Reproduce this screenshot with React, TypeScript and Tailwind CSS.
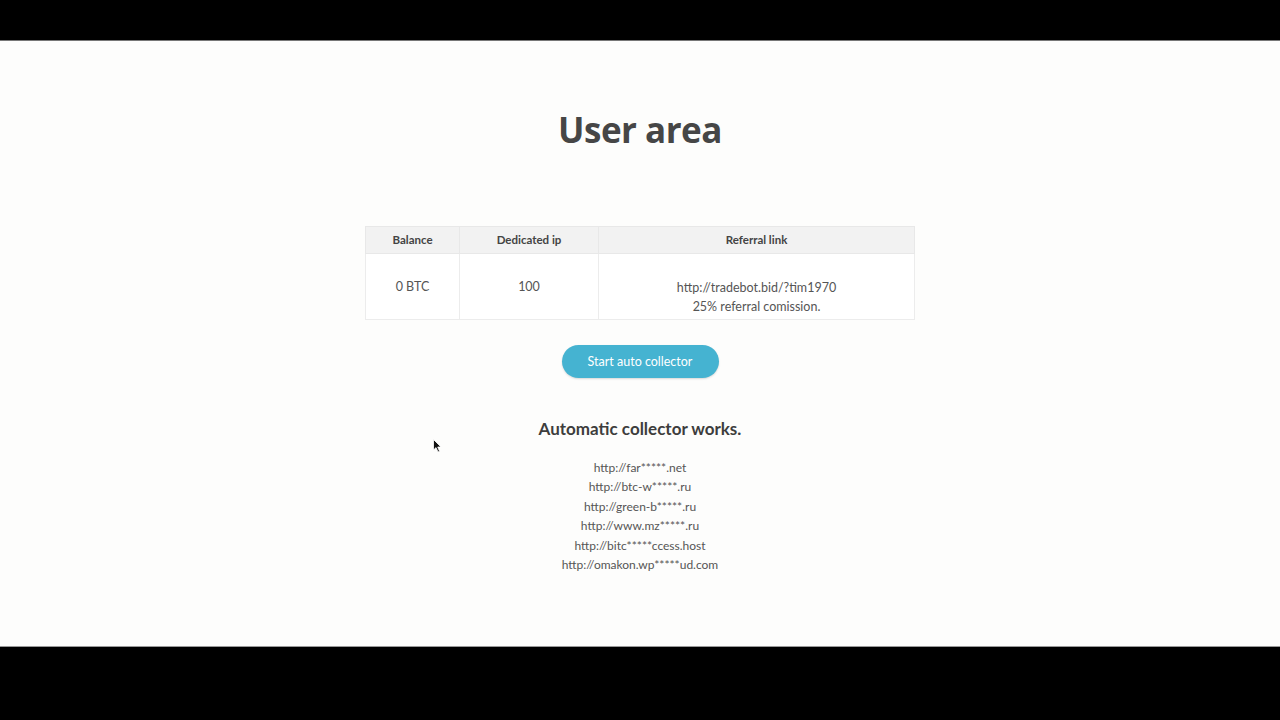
const sites = [
  'http://far*****.net',
  'http://btc-w*****.ru',
  'http://green-b*****.ru',
  'http://www.mz*****.ru',
  'http://bitc*****ccess.host',
  'http://omakon.wp*****ud.com',
];

export default function App() {
  return (
    <div className="w-[1280px] h-[720px] bg-black flex flex-col overflow-hidden" style={{ fontFamily: 'Lato, "Open Sans", sans-serif' }}>
      <div className="h-[41px] shrink-0 border-b border-[#777]" />
      <main className="relative h-[605px] bg-[#fdfdfc] flex flex-col items-center">
        <h1 className="mt-[66px] text-[35px] leading-[46px] font-bold text-[#464646] tracking-[-0.5px]" style={{ fontFamily: '"Open Sans", sans-serif' }}>
          User area
        </h1>

        <table className="mt-[73px] w-[550px] border-collapse text-[12.5px] text-[#555]">
          <thead>
            <tr className="bg-[#f2f2f2] h-[27px] text-[11.5px]">
              <th className="w-[94px] border border-[#e8e8e8] font-bold text-[#444]">Balance</th>
              <th className="w-[139px] border border-[#e8e8e8] font-bold text-[#444]">Dedicated ip</th>
              <th className="border border-[#e8e8e8] font-bold text-[#444]">Referral link</th>
            </tr>
          </thead>
          <tbody>
            <tr className="h-[66px] bg-white">
              <td className="border border-[#ececec] text-center pt-[2px]">0 BTC</td>
              <td className="border border-[#ececec] text-center pt-[2px]">100</td>
              <td className="border border-[#ececec] text-center leading-[19px] pt-[20px]">
                <div>http://tradebot.bid/?tim1970</div>
                <div>25% referral comission.</div>
              </td>
            </tr>
          </tbody>
        </table>

        <button className="mt-[25px] w-[157px] h-[33px] pt-[2px] rounded-full bg-[#45b3d1] text-white text-[12.5px] shadow-[0_1px_2px_rgba(0,0,0,0.15)]">
          Start auto collector
        </button>

        <h2 className="mt-[38px] text-[17px] font-bold text-[#3d3d3d]">Automatic collector works.</h2>

        <ul className="mt-[16px] flex flex-col items-center text-[12px] leading-[19.6px] text-[#555]">
          {sites.map((s) => (
            <li key={s}>{s}</li>
          ))}
        </ul>

        <svg className="absolute left-[433px] top-[398px]" width="9" height="14" viewBox="0 0 9 14">
          <path d="M0.5 0.5 L0.5 11 L3 8.6 L5 13 L6.6 12.3 L4.7 8 L8 8 Z" fill="#111" stroke="#fff" strokeWidth="0.8" />
        </svg>
      </main>
      <div className="flex-1 border-t border-[#999]" />
    </div>
  );
}
